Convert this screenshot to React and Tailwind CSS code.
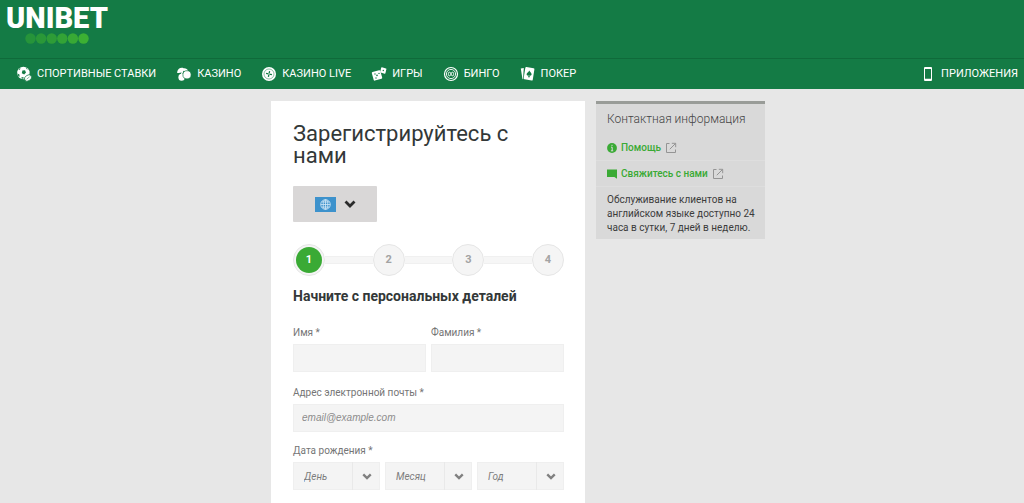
import clsx from 'clsx';

function BallIcon() {
  return (
    <svg viewBox="0 0 16 16" className="h-4 w-4 flex-none" aria-hidden="true">
      <circle cx="7.4" cy="7" r="6.2" fill="#fff" />
      <path d="M6.4 4.6 9 4.2 10 6.4 8.2 8.4 5.8 7.2Z" fill="#147b45" />
      <path d="M1.4 7.6 3.4 8.6 3.6 10.8 2.4 10.2Z M3 2.6 4.8 2.4 3.2 4.2Z M9.8 1.6 12 3.4 10.4 3Z M5.6 11 7.8 11.4 7.4 12.8 5.6 12.4Z" fill="#147b45" />
      <ellipse cx="12" cy="12" rx="3.8" ry="2.8" transform="rotate(-35 12 12)" fill="#fff" stroke="#147b45" strokeWidth="0.7" />
      <path d="M10.6 13.2 13.6 10.8" stroke="#147b45" strokeWidth="0.5" />
    </svg>
  );
}

function CherryIcon() {
  return (
    <svg viewBox="0 0 16 16" className="h-4 w-4 flex-none" aria-hidden="true">
      <path d="M1 6.8C1.4 3.2 4.4 1 7.6 2.2 10 2 11.6 3 12 5 10 5.8 8.6 5.6 7.4 4.8 6 6.6 3.6 7.6 1 6.8Z" fill="#fff" />
      <path d="M6.8 4.4 5.4 9" stroke="#fff" strokeWidth="1.4" />
      <ellipse cx="5.6" cy="11.2" rx="3.2" ry="3.5" fill="#fff" />
      <circle cx="11" cy="8.8" r="4.1" fill="#fff" stroke="#147b45" strokeWidth="0.7" />
    </svg>
  );
}

function ChipIcon() {
  return (
    <svg viewBox="0 0 16 16" className="h-4 w-4 flex-none" aria-hidden="true">
      <circle cx="8" cy="8" r="7" fill="#fff" />
      <circle cx="8" cy="8" r="5" fill="none" stroke="#147b45" strokeWidth="0.5" />
      <path d="M8 5V11 M5 8H11" stroke="#147b45" strokeWidth="1.3" transform="rotate(12 8 8)" />
      <circle cx="8" cy="8" r="0.8" fill="#fff" />
    </svg>
  );
}

function DiceIcon() {
  return (
    <svg viewBox="0 0 16 16" className="h-4 w-4 flex-none" aria-hidden="true">
      <rect x="1.6" y="5" width="8.8" height="8.8" rx="1" transform="rotate(-16 6 9.4)" fill="#fff" />
      <rect x="9.6" y="1.8" width="5.4" height="5.4" rx="0.6" transform="rotate(14 12.3 4.5)" fill="#fff" />
      <g fill="#147b45">
        <circle cx="4" cy="8" r="0.7" />
        <circle cx="6" cy="9.4" r="0.8" />
        <circle cx="8" cy="7.4" r="0.7" />
        <circle cx="5" cy="12" r="0.7" />
        <circle cx="12.3" cy="4.5" r="0.7" />
      </g>
    </svg>
  );
}

function BingoIcon() {
  return (
    <svg viewBox="0 0 16 16" className="h-4 w-4 flex-none" aria-hidden="true" fill="none" stroke="#fff">
      <circle cx="8" cy="8" r="6.5" strokeWidth="1.2" />
      <circle cx="8" cy="8" r="4.6" strokeWidth="0.9" />
      <rect x="5.4" y="6.2" width="2.2" height="3.6" rx="1.1" strokeWidth="0.9" />
      <rect x="8.4" y="6.2" width="2.2" height="3.6" rx="1.1" strokeWidth="0.9" />
    </svg>
  );
}

function CardsIcon() {
  return (
    <svg viewBox="0 0 16 16" className="h-4 w-4 flex-none" aria-hidden="true">
      <path d="M0.8 2.6 3.8 2 3 13.4 2.4 12.6Z" fill="#fff" />
      <rect x="4.4" y="1.6" width="9.2" height="12.4" rx="1" transform="rotate(9 9 8)" fill="#fff" />
      <path d="M9.2 4.4C10 6 11.8 6.8 11.6 8.6 11.4 9.8 10 10 9.4 9.2L9.9 11.2H8L8.7 9.2C7.8 9.9 6.6 9.4 6.6 8.2 6.7 6.6 8.6 6.2 9.2 4.4Z" fill="#147b45" />
    </svg>
  );
}

function PhoneIcon() {
  return (
    <svg viewBox="0 0 10 16" className="h-4 w-[10px] flex-none" aria-hidden="true">
      <path fillRule="evenodd" d="M2 1H8Q9 1 9 2V14Q9 15 8 15H2Q1 15 1 14V2Q1 1 2 1ZM2 3V12.8H8V3Z" fill="#fff" />
    </svg>
  );
}

function Chevron({ className }) {
  return (
    <svg viewBox="0 0 12 8" className={clsx('flex-none', className)} fill="none" stroke="currentColor" aria-hidden="true">
      <path d="M1.5 1.5 6 6 10.5 1.5" strokeWidth="2.8" />
    </svg>
  );
}

function ExternalIcon() {
  return (
    <svg viewBox="0 0 12 12" className="h-3 w-3 flex-none" fill="none" stroke="#949494" aria-hidden="true">
      <path d="M4.5 1.5H1.5V10.5H10.5V7.5 M4.8 7.2 10.5 1.5 M6.8 1.3H10.7V5.2" strokeWidth="1" />
    </svg>
  );
}

function InfoIcon() {
  return (
    <svg viewBox="0 0 10 10" className="h-[10px] w-[10px] flex-none" aria-hidden="true">
      <circle cx="5" cy="5" r="4.9" fill="#3aaa35" />
      <path d="M5 1.8V3 M4 4.2H5.2V7.8 M3.9 7.8H6.2" stroke="#dadada" strokeWidth="1" fill="none" />
    </svg>
  );
}

function ChatIcon() {
  return (
    <svg viewBox="0 0 10 10" className="h-[10px] w-[10px] flex-none" aria-hidden="true">
      <path d="M0 0.5H10V9.8L7.4 8H0Z" fill="#3aaa35" />
    </svg>
  );
}

const NAV_ITEMS = [
  { label: 'СПОРТИВНЫЕ СТАВКИ', Icon: BallIcon },
  { label: 'КАЗИНО', Icon: CherryIcon },
  { label: 'КАЗИНО LIVE', Icon: ChipIcon },
  { label: 'ИГРЫ', Icon: DiceIcon },
  { label: 'БИНГО', Icon: BingoIcon },
  { label: 'ПОКЕР', Icon: CardsIcon },
];

const LOGO_DOTS = ['#26943a', '#2a9838', '#2e9c37', '#33a336', '#38a935', '#3cb033'];

const STEPS = [1, 2, 3, 4];

function NavLink({ label, Icon }) {
  return (
    <a href="#" className="flex items-center gap-[5px] whitespace-nowrap">
      <Icon />
      {label}
    </a>
  );
}

function Header() {
  return (
    <header className="bg-[#147b45] text-white">
      <div className="h-[58px] px-1.5 pt-1">
        <a href="#" className="inline-flex flex-col items-center">
          <span className="text-[29px] leading-7 font-black">UNIBET</span>
          <svg viewBox="0 0 64 12" className="h-3 w-16" aria-hidden="true">
            {LOGO_DOTS.map((color, index) => (
              <circle key={color} cx={5.5 + index * 10.6} cy="6.5" r="5.2" fill={color} />
            ))}
          </svg>
        </a>
      </div>
      <nav className="flex h-[31px] items-center justify-between border-t border-[#0f6a3a] pr-1.5 pl-4 text-[11px]">
        <div className="flex gap-5">
          {NAV_ITEMS.map((item) => (
            <NavLink key={item.label} {...item} />
          ))}
        </div>
        <a href="#" className="flex items-center gap-2">
          <PhoneIcon />
          ПРИЛОЖЕНИЯ
        </a>
      </nav>
    </header>
  );
}

function Steps() {
  return (
    <ol className="mt-[22px] flex items-center">
      {STEPS.map((step) => (
        <li key={step} className={clsx('flex items-center', step > 1 && 'flex-1')}>
          {step > 1 && <span className="h-2 flex-1 border-y border-[#f0f0f0] bg-[#f6f6f6]" />}
          <span className="flex h-8 w-8 items-center justify-center rounded-full border border-[#e6e6e6] bg-[#f5f5f5]">
            <span
              className={clsx(
                'flex h-[26px] w-[26px] items-center justify-center rounded-full text-[11px] font-bold',
                step === 1 ? 'bg-[#3aaa35] text-white' : 'text-[#a3a3a3]'
              )}
            >
              {step}
            </span>
          </span>
        </li>
      ))}
    </ol>
  );
}

function TextField({ id, label, type = 'text', placeholder }) {
  return (
    <div className="min-w-0 flex-1">
      <label htmlFor={id} className="block leading-[18px]">
        {label}
      </label>
      <input
        id={id}
        type={type}
        placeholder={placeholder}
        className="mt-0.5 block h-7 w-full border border-[#efefef] bg-[#f4f4f4] px-2 pb-0.5 font-['Liberation_Sans',sans-serif] placeholder:text-[#8c8c8c] placeholder:italic"
      />
    </div>
  );
}

function DateSelect({ label }) {
  return (
    <div className="relative flex-1">
      <select
        aria-label={label}
        className="block h-7 w-full appearance-none border border-[#efefef] bg-[#f4f4f4] pl-[10px] text-[#7d7d7d] italic"
      >
        <option>{label}</option>
      </select>
      <span className="pointer-events-none absolute inset-y-0 right-0 flex w-7 items-center justify-center border-l border-[#e9e9e9] text-[#808080]">
        <Chevron className="h-[7px] w-[10px]" />
      </span>
    </div>
  );
}

function RegistrationForm() {
  return (
    <form className="min-w-0 flex-1 bg-white pt-[22px] pr-[21px] pl-[22px]">
      <h1 className="text-[22px] leading-[22px] text-[#333838]">Зарегистрируйтесь с нами</h1>
      <button
        type="button"
        aria-label="Язык"
        className="mt-[19px] flex h-9 w-[84px] items-center justify-center gap-2 rounded-[1px] bg-[#d9d7d7] text-[#2b2b2b]"
      >
        <svg viewBox="0 0 21 15" className="h-[15px] w-[21px]" fill="none" stroke="#d3e9f7" strokeWidth="0.8" aria-hidden="true">
          <rect width="21" height="15" fill="#3d92cc" stroke="none" />
          <circle cx="10.5" cy="7.5" r="4.8" />
          <ellipse cx="10.5" cy="7.5" rx="2.3" ry="4.8" />
          <path d="M10.5 2.7V12.3 M5.7 7.5H15.3 M6.5 5H14.5 M6.5 10H14.5" />
        </svg>
        <Chevron className="h-2 w-3" />
      </button>

      <Steps />
      <h2 className="mt-3 text-sm leading-4 font-bold text-[#333838]">Начните с персональных деталей</h2>

      <div className="mt-5 text-[10px] text-[#757575]">
        <div className="flex gap-[5px]">
          <TextField id="first-name" label="Имя *" />
          <TextField id="last-name" label="Фамилия *" />
        </div>
        <div className="mt-3 flex">
          <TextField id="email" type="email" label="Адрес электронной почты *" placeholder="email@example.com" />
        </div>
        <fieldset className="mt-[10px]">
          <legend className="leading-[18px]">Дата рождения *</legend>
          <div className="mt-0.5 flex gap-[5px]">
            <DateSelect label="День" />
            <DateSelect label="Месяц" />
            <DateSelect label="Год" />
          </div>
        </fieldset>
      </div>
    </form>
  );
}

function ContactPanel() {
  return (
    <aside className="w-[169px] flex-none self-start border-t-[3px] border-[#999c98] bg-[#d9d9d9] text-[10px]">
      <h2 className="px-[11px] pt-[7px] pb-2 text-xs leading-4 font-light text-[#444]">Контактная информация</h2>
      <a href="#" className="flex h-[26px] items-center gap-1 border-b border-[#dedede] px-[11px] font-medium text-[#3aaa35]">
        <InfoIcon />
        Помощь
        <ExternalIcon />
      </a>
      <a href="#" className="flex h-[26px] items-center gap-1 border-b border-[#dedede] px-[11px] font-medium text-[#3aaa35]">
        <ChatIcon />
        Свяжитесь с нами
        <ExternalIcon />
      </a>
      <p className="pt-1.5 pr-1 pb-1 pl-[11px] leading-[14px] text-[#3c3c3c]">
        Обслуживание клиентов на английском языке доступно 24 часа в сутки, 7 дней в неделю.
      </p>
    </aside>
  );
}

export default function App() {
  return (
    <div className="flex min-h-screen flex-col bg-[#e7e7e7] font-['Roboto','Liberation_Sans',sans-serif]">
      <Header />
      <main className="mx-auto flex w-full max-w-[506px] flex-1 gap-[11px] pt-3 pl-3">
        <RegistrationForm />
        <ContactPanel />
      </main>
    </div>
  );
}
